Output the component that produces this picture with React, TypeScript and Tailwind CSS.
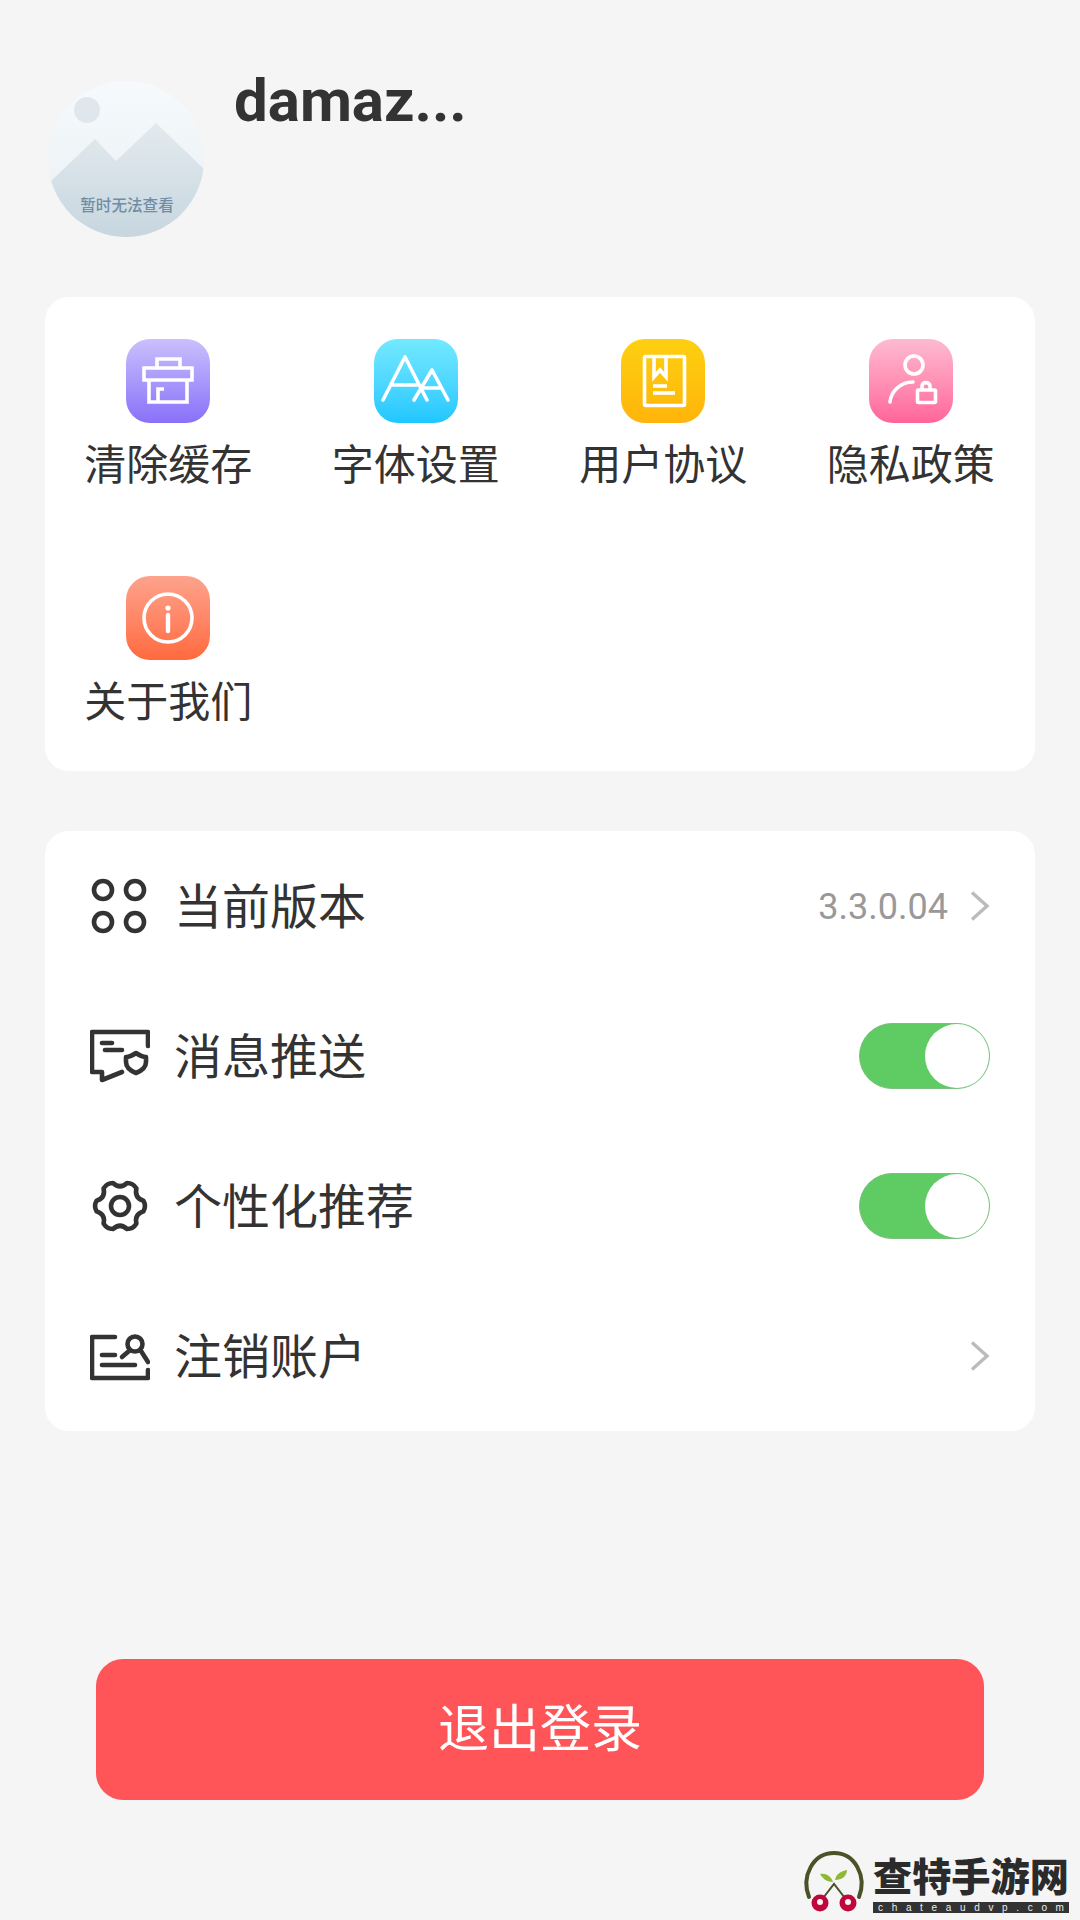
const cjk = "font-['Roboto','Noto_Sans_CJK_SC',sans-serif]";

function IconTile({ gradient, children }: { gradient: string; children: React.ReactNode }) {
  return (
    <div className={`h-[84px] w-[84px] rounded-[24px] bg-gradient-to-b ${gradient}`}>
      <svg viewBox="0 0 84 84" className="h-full w-full" fill="none" stroke="#fff" strokeWidth="3.6">
        {children}
      </svg>
    </div>
  );
}

const shortcuts = [
  {
    label: "清除缓存",
    gradient: "from-[#cbbffd] to-[#8a70f8]",
    icon: (
      <>
        <path d="M31 29V20H54V29" />
        <path d="M18 29H66V41H18Z" />
        <path d="M23 41V63H61V41" />
        <path d="M32 63V50H38" />
      </>
    ),
  },
  {
    label: "字体设置",
    gradient: "from-[#72e9ff] to-[#1cc7ff]",
    icon: (
      <g strokeLinecap="round" strokeLinejoin="round">
        <path d="M9 61L31 18L53 61" />
        <path d="M19 46H44" />
        <path d="M40 61L58 31L74 61" />
        <path d="M49 49H66" />
      </g>
    ),
  },
  {
    label: "用户协议",
    gradient: "from-[#fdd010] to-[#ffb40b]",
    icon: (
      <>
        <rect x="23.5" y="17.5" width="40" height="49" rx="1.5" />
        <path d="M33 18V38L39 31L45 38V18" />
        <path d="M32 47H46" />
        <path d="M32 54H54" />
      </>
    ),
  },
  {
    label: "隐私政策",
    gradient: "from-[#fdbad2] to-[#ff649a]",
    icon: (
      <>
        <circle cx="45" cy="26" r="9" />
        <path d="M21 63C22 52 32 43 44 43" strokeLinecap="round" />
        <rect x="48.5" y="51" width="18" height="12.5" rx="1" />
        <path d="M53 51V47C53 42.5 61 42.5 61 47V51" />
      </>
    ),
  },
  {
    label: "关于我们",
    gradient: "from-[#fda28c] to-[#ff693d]",
    icon: (
      <>
        <circle cx="42" cy="42" r="24" />
        <path d="M42 39V55" strokeWidth="4.4" strokeLinecap="round" />
        <circle cx="42" cy="32" r="2.6" fill="#fff" stroke="none" />
      </>
    ),
  },
];

function gearPath() {
  const cx = 30;
  const cy = 30;
  const pt = (deg: number, r: number) => {
    const a = (deg * Math.PI) / 180;
    return `${(cx + r * Math.cos(a)).toFixed(1)} ${(cy + r * Math.sin(a)).toFixed(1)}`;
  };
  let d = `M${pt(-13, 24)}`;
  for (let i = 0; i < 6; i++) {
    const a = i * 60;
    d += ` Q${pt(a, 26.5)} ${pt(a + 13, 24)} Q${pt(a + 30, 16.5)} ${pt(a + 47, 24)}`;
  }
  return d + "Z";
}

const rowIcons = {
  apps: (
    <>
      <circle cx="13" cy="14" r="9" />
      <circle cx="45" cy="14" r="9" />
      <circle cx="13" cy="46" r="9" />
      <circle cx="45" cy="46" r="9" />
    </>
  ),
  message: (
    <>
      <path d="M58 20V6H2V46H12V54L32 46" />
      <path d="M12 17H22" />
      <path d="M15 24H32" />
      <path d="M36 31C40 31 43 29 46 27C49 29 52 31 56 31V36C56 41 51 45 46 47C41 45 36 41 36 36Z" />
    </>
  ),
  gear: (
    <>
      <path d={gearPath()} />
      <circle cx="30" cy="30" r="9" />
    </>
  ),
  account: (
    <>
      <path d="M25 11H2V52H58V44" />
      <path d="M12 29H25" />
      <path d="M12 39H45" />
      <circle cx="45" cy="18" r="7.5" />
      <path d="M32 31L39 25" />
      <path d="M51 25L58 36" />
    </>
  ),
};

function RowIcon({ name }: { name: keyof typeof rowIcons }) {
  return (
    <svg
      viewBox="0 0 60 60"
      className="h-[60px] w-[60px] shrink-0"
      fill="none"
      stroke="#333"
      strokeWidth="4.6"
      strokeLinecap="round"
      strokeLinejoin="round"
    >
      {rowIcons[name]}
    </svg>
  );
}

function Chevron() {
  return (
    <svg viewBox="0 0 20 30" className="h-[30px] w-[20px]" fill="none" stroke="#bbb" strokeWidth="3.4">
      <path d="M2 1.5L17 15L2 28.5" />
    </svg>
  );
}

function Toggle() {
  return (
    <div className="flex h-[66px] w-[131px] justify-end rounded-full border border-[#7cc07f] bg-[#5fcb63]">
      <div className="h-[64px] w-[64px] rounded-full bg-white" />
    </div>
  );
}

function Row({ icon, label, children }: { icon: keyof typeof rowIcons; label: string; children: React.ReactNode }) {
  return (
    <div className="flex h-[150px] items-center px-[45px]">
      <RowIcon name={icon} />
      <span className="ml-[24px] mt-[3px] flex-1 text-[48px] leading-[60px] text-[#333]">{label}</span>
      {children}
    </div>
  );
}

function Avatar() {
  return (
    <svg viewBox="0 0 156 156" className="h-[156px] w-[156px] shrink-0">
      <defs>
        <linearGradient id="sky" x1="0" y1="0" x2="0" y2="1">
          <stop offset="0" stopColor="#f6fafc" />
          <stop offset="1" stopColor="#e8eff3" />
        </linearGradient>
        <linearGradient id="hill" x1="0" y1="0" x2="0" y2="1">
          <stop offset="0" stopColor="#e3eaee" />
          <stop offset="1" stopColor="#c7d6df" />
        </linearGradient>
        <clipPath id="disc">
          <circle cx="78" cy="78" r="78" />
        </clipPath>
      </defs>
      <g clipPath="url(#disc)">
        <rect width="156" height="156" fill="url(#sky)" />
        <circle cx="39" cy="29" r="13" fill="#dfe7ed" />
        <path d="M3 100L47 58L68 80L108 42L156 88V156H0V100Z" fill="url(#hill)" />
      </g>
      <text
        x="79"
        y="130"
        textAnchor="middle"
        fontSize="15.6"
        fontWeight="500"
        fill="#6f8ea5"
        fontFamily="'Noto Sans CJK SC', sans-serif"
      >
        暂时无法查看
      </text>
    </svg>
  );
}

function Watermark() {
  return (
    <div className="absolute left-[800px] top-[1850px] flex h-[66px] w-[270px]">
      <svg viewBox="0 0 70 66" className="h-[66px] w-[70px] shrink-0" fill="none">
        <path d="M9 47C1 26 13 3 34 3C55 3 67 26 59 47" stroke="#4a5228" strokeWidth="4" strokeLinecap="round" />
        <path d="M20 52L34 34L48 52" stroke="#4a5228" strokeWidth="2" />
        <path d="M33 32C27 32 23 29 20 24C26 23 31 26 33 32Z" fill="#8db934" />
        <path d="M35 30C36 24 41 21 47 20C47 26 42 30 35 30Z" fill="#8db934" />
        <circle cx="20" cy="53" r="8.5" fill="#c0073c" />
        <circle cx="48" cy="53" r="8.5" fill="#c0073c" />
        <circle cx="20" cy="52" r="3" fill="#f5f5f5" />
        <circle cx="48" cy="52" r="3" fill="#f5f5f5" />
      </svg>
      <div className="ml-[3px] flex w-[196px] flex-col">
        <div className="mt-[4px] h-[40px] whitespace-nowrap font-['Noto_Sans_CJK_SC',sans-serif] text-[39.2px] font-black leading-[40px] text-[#2b2b2b]">
          查特手游网
        </div>
        <div className="mt-[8px] flex h-[11px] items-center justify-between bg-[#333] px-[5px] font-['Liberation_Sans',sans-serif] text-[10px] leading-[11px] text-[#eee]">
          {"chateaudvp.com".split("").map((c, i) => (
            <span key={i}>{c}</span>
          ))}
        </div>
      </div>
    </div>
  );
}

export default function App() {
  return (
    <div className={`relative min-h-[1920px] w-[1080px] overflow-hidden bg-[#f5f5f5] pt-[81px] ${cjk}`}>
      {/* header */}
      <div className="flex h-[156px] pl-[48px]">
        <Avatar />
        <div className="ml-[30px] mt-[-16px] text-[60px] font-bold leading-[72px] text-[#333]">damaz...</div>
      </div>

      {/* shortcuts */}
      <div className="mx-[45px] mt-[60px] grid grid-cols-4 gap-y-[80px] rounded-[24px] bg-white pb-[38px] pt-[42px]">
        {shortcuts.map((s) => (
          <div key={s.label} className="flex flex-col items-center pr-[1px]">
            <IconTile gradient={s.gradient}>{s.icon}</IconTile>
            <div className="mt-[13px] whitespace-nowrap text-[42px] leading-[60px] text-[#333]">{s.label}</div>
          </div>
        ))}
      </div>

      {/* settings */}
      <div className="mx-[45px] mt-[60px] rounded-[24px] bg-white">
        <Row icon="apps" label="当前版本">
          <span className="mr-[22px] mt-[2px] text-[36px] leading-[44px] text-[#999]">3.3.0.04</span>
          <Chevron />
        </Row>
        <Row icon="message" label="消息推送">
          <Toggle />
        </Row>
        <Row icon="gear" label="个性化推荐">
          <Toggle />
        </Row>
        <Row icon="account" label="注销账户">
          <Chevron />
        </Row>
      </div>

      <div className="mx-[96px] mt-[228px] flex h-[141px] items-center justify-center rounded-[27px] bg-[#ff5558] pt-[2px] text-[51px] text-white">
        退出登录
      </div>

      <Watermark />
    </div>
  );
}
